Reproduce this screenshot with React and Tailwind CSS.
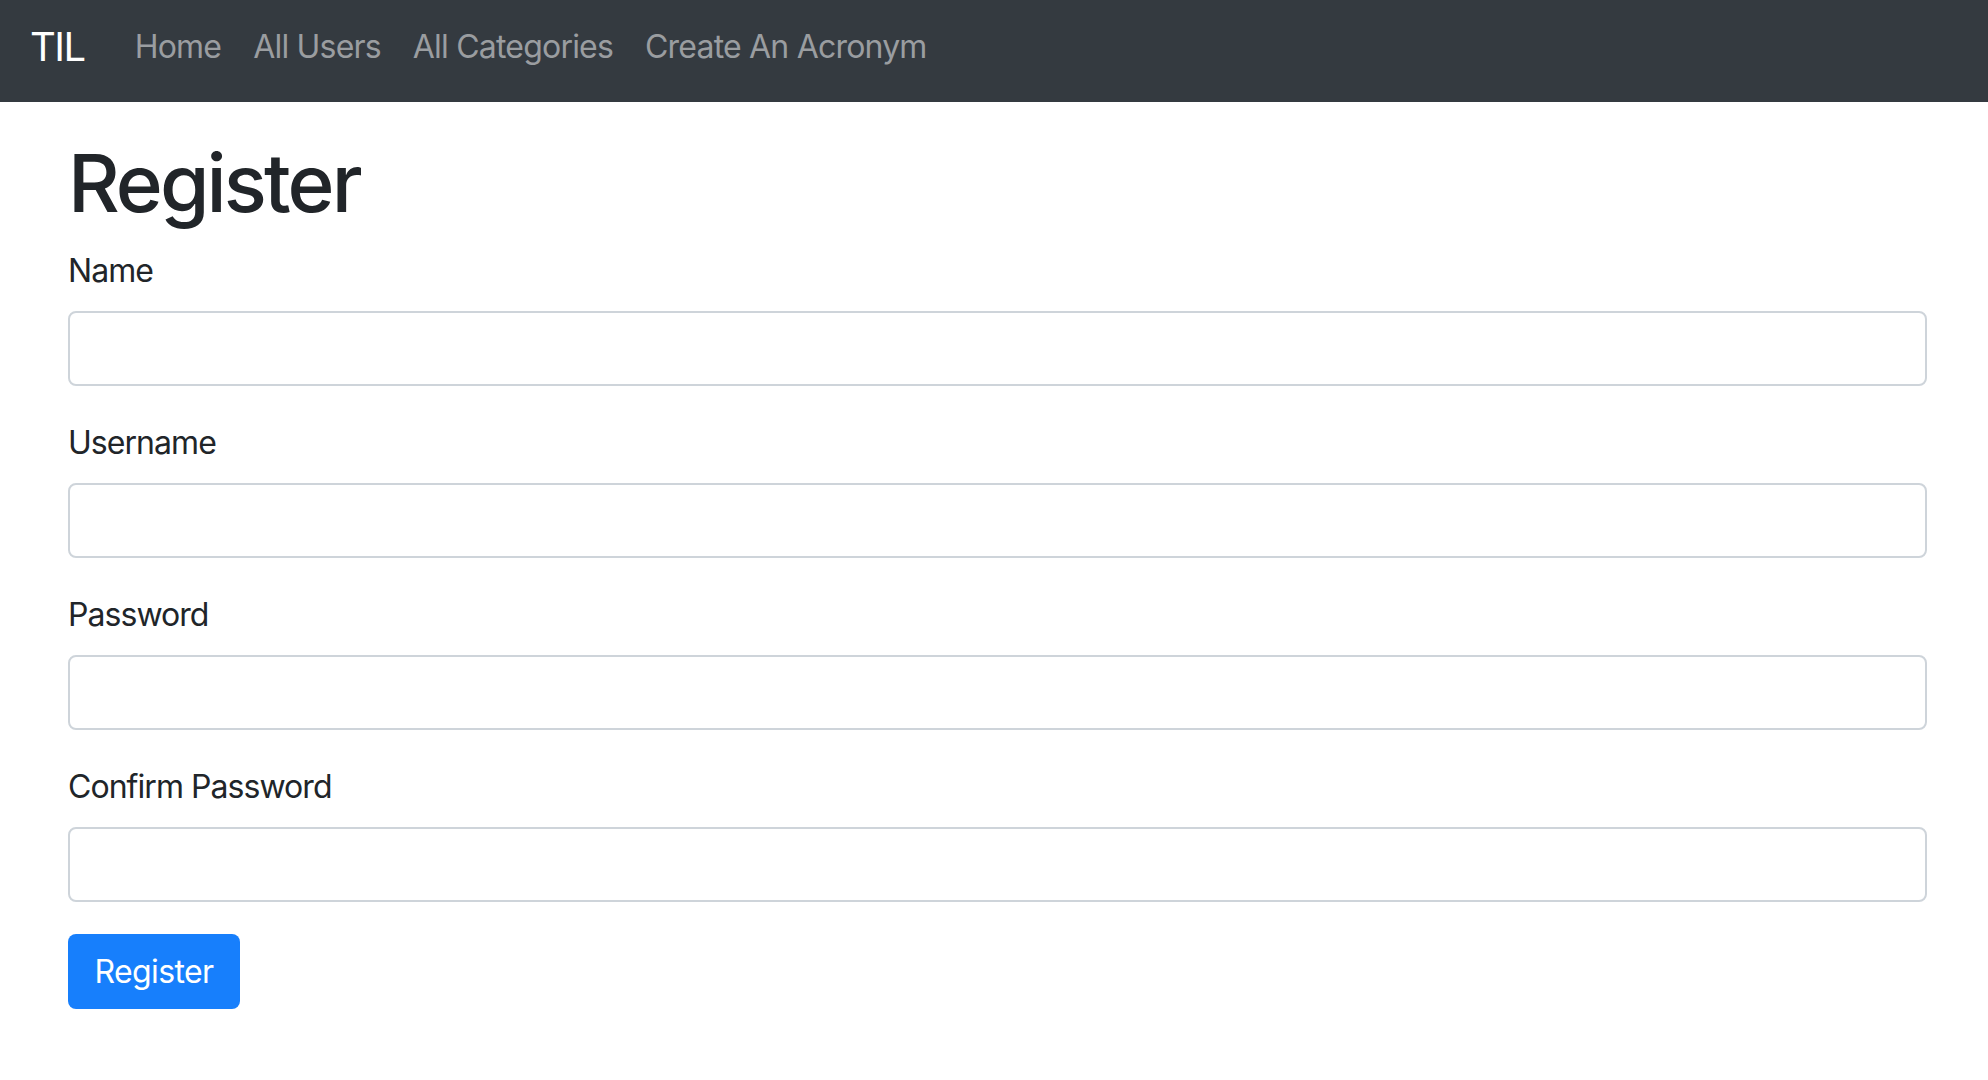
import { useState } from 'react';

const fields = [
  { id: 'name', label: 'Name', type: 'text' },
  { id: 'username', label: 'Username', type: 'text' },
  { id: 'password', label: 'Password', type: 'password' },
  { id: 'confirmPassword', label: 'Confirm Password', type: 'password' },
];

const links = ['Home', 'All Users', 'All Categories', 'Create An Acronym'];

function Field({ id, label, type, value, onChange }) {
  return (
    <div className="mb-[33px]">
      <label htmlFor={id} className="block text-[32px] leading-[48px] tracking-[-0.95px] mb-[16px] text-[#212529]">
        {label}
      </label>
      <input
        id={id}
        type={type}
        value={value}
        onChange={(e) => onChange(id, e.target.value)}
        className="block w-full h-[75px] px-[24px] text-[32px] text-[#495057] bg-white border-2 border-[#ced4da] rounded-[8px] outline-none"
      />
    </div>
  );
}

export default function App() {
  const [form, setForm] = useState({ name: '', username: '', password: '', confirmPassword: '' });

  const update = (key, val) => setForm((f) => ({ ...f, [key]: val }));

  return (
    <div className="min-h-screen bg-white font-['Inter','Liberation_Sans',sans-serif] text-[#212529]">
      {/* Navbar */}
      <nav className="h-[102px] bg-[#343a40] flex items-center px-[30px] pb-[9px]">
        <a href="#" className="text-[40px] leading-[60px] tracking-[-1.5px] text-white mr-[34px]">TIL</a>
        <ul className="flex items-center">
          {links.map((l) => (
            <li key={l}>
              <a href="#" className="block px-[16px] text-[32px] leading-[48px] tracking-[-0.8px] text-[#9a9da0]">{l}</a>
            </li>
          ))}
        </ul>
      </nav>

      {/* Form */}
      <div className="ml-[68px] w-[1859px]">
        <h1 className="mt-[33px] mb-[16px] text-[80px] leading-[96px] tracking-[-2.9px] font-medium">Register</h1>
        <form onSubmit={(e) => e.preventDefault()}>
          {fields.map((f) => (
            <Field key={f.id} {...f} value={form[f.id]} onChange={update} />
          ))}
          <button
            type="submit"
            className="-mt-[1px] w-[172px] h-[75px] text-[32px] tracking-[-0.6px] text-white bg-[#177ffc] rounded-[8px]"
          >
            Register
          </button>
        </form>
      </div>
    </div>
  );
}
